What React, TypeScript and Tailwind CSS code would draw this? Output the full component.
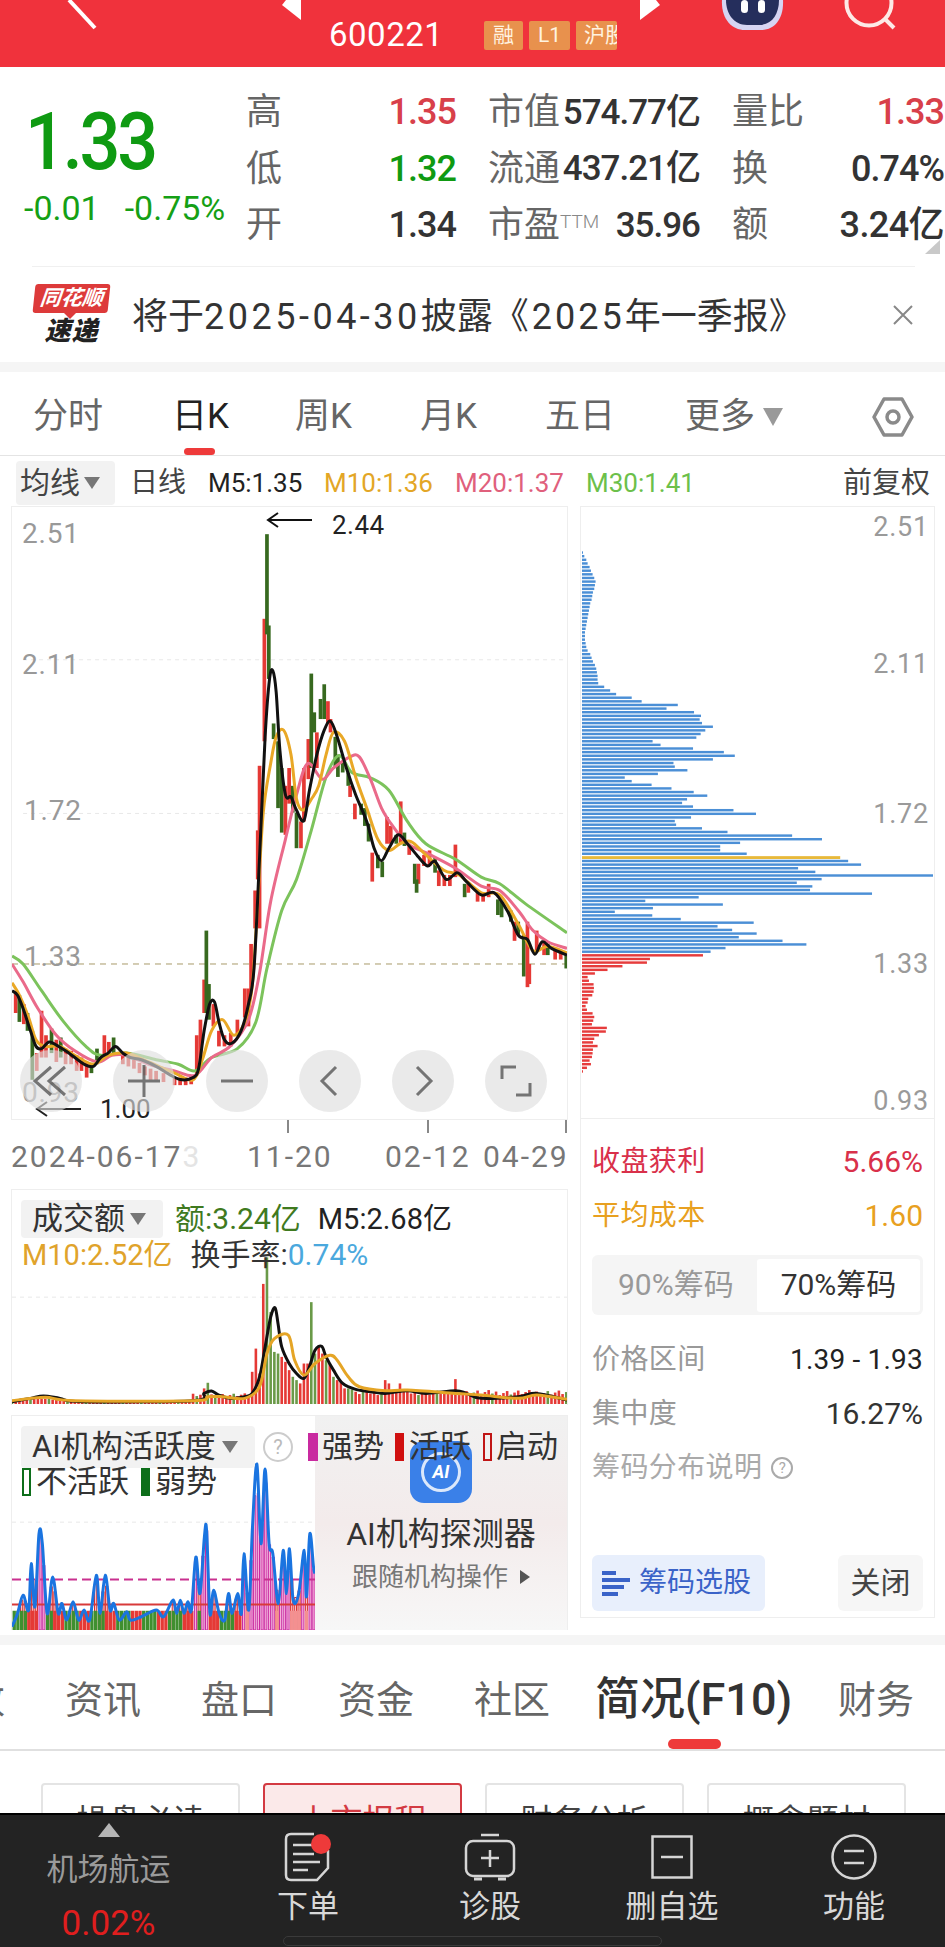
import React from "react";

type P = [number, number];
const smooth = (pts: P[]) => {
  let d = `M${pts[0][0]} ${pts[0][1]}`;
  for (let i = 0; i < pts.length - 1; i++) {
    const p0 = pts[Math.max(0, i - 1)], p1 = pts[i], p2 = pts[i + 1], p3 = pts[Math.min(pts.length - 1, i + 2)];
    const c1x = p1[0] + (p2[0] - p0[0]) / 6, c1y = p1[1] + (p2[1] - p0[1]) / 6;
    const c2x = p2[0] - (p3[0] - p1[0]) / 6, c2y = p2[1] - (p3[1] - p1[1]) / 6;
    d += ` C${c1x} ${c1y} ${c2x} ${c2y} ${p2[0]} ${p2[1]}`;
  }
  return d;
};
const interp = (pts: P[], x: number) => {
  for (let i = 0; i < pts.length - 1; i++) {
    if (x >= pts[i][0] && x <= pts[i + 1][0]) {
      const t = (x - pts[i][0]) / (pts[i + 1][0] - pts[i][0]);
      return pts[i][1] + t * (pts[i + 1][1] - pts[i][1]);
    }
  }
  return pts[pts.length - 1][1];
};
const Line = ({ pts, color, w = 3 }: { pts: P[]; color: string; w?: number }) => (
  <path d={smooth(pts)} fill="none" stroke={color} strokeWidth={w} vectorEffect="non-scaling-stroke" strokeLinejoin="round" />
);

const RED = "#e53935", GRN = "#37691f";
const m5: P[] = [[30,1100],[45,1110],[60,1140],[80,1190],[95,1225],[110,1230],[130,1215],[150,1222],[175,1235],[200,1250],[225,1265],[250,1270],[270,1250],[290,1240],[310,1225],[330,1240],[350,1250],[380,1255],[420,1270],[460,1290],[490,1300],[520,1295],[535,1275],[550,1190],[565,1130],[578,1125],[590,1170],[605,1210],[625,1218],[650,1190],[670,1130],[685,1050],[700,800],[715,530],[727,400],[736,382],[745,430],[755,560],[770,660],[785,665],[800,695],[820,718],[835,650],[855,570],[875,515],[892,495],[910,530],[935,600],[960,660],[990,720],[1010,780],[1030,808],[1050,780],[1075,750],[1100,770],[1130,800],[1155,820],[1175,810],[1205,850],[1235,835],[1260,855],[1300,885],[1335,880],[1370,920],[1400,975],[1425,985],[1445,1018],[1465,990],[1490,1005],[1532,1020]];
const m10: P[] = [[30,1082],[50,1110],[75,1160],[95,1210],[120,1225],[160,1225],[200,1245],[250,1265],[290,1245],[340,1240],[400,1260],[470,1285],[520,1300],[545,1255],[570,1190],[600,1165],[630,1200],[660,1170],[680,1090],[695,900],[710,700],[730,590],[745,530],[765,515],[785,570],[800,670],[818,695],[840,670],[860,640],[880,570],[900,520],[930,540],[960,620],[990,690],[1020,760],[1050,785],[1080,770],[1110,765],[1150,795],[1200,830],[1240,840],[1300,880],[1350,885],[1400,950],[1440,1010],[1480,1000],[1532,1015]];
const m20: P[] = [[30,1040],[60,1080],[100,1140],[150,1200],[200,1235],[260,1260],[300,1245],[340,1245],[400,1265],[470,1280],[525,1290],[570,1250],[620,1225],[670,1165],[700,1060],[730,900],[770,760],[800,660],[830,590],[870,625],[900,600],[945,575],[970,575],[1000,625],[1030,690],[1060,730],[1100,770],[1150,790],[1230,825],[1300,865],[1350,875],[1400,920],[1440,965],[1480,990],[1532,1005]];
const m30: P[] = [[30,1022],[60,1040],[110,1100],[170,1170],[230,1225],[270,1245],[340,1240],[420,1255],[480,1265],[525,1280],[570,1250],[640,1230],[690,1170],[720,1050],[760,920],[800,850],[840,740],[880,620],[915,572],[950,610],[1000,622],[1050,650],[1100,720],[1150,770],[1230,805],[1300,845],[1350,860],[1420,905],[1532,970]];

const candles: [number, number, number, 0 | 1][] = [
  [40,1100,1150,0],[50,1110,1170,1],[62,1130,1175,0],[72,1150,1190,1],[85,1190,1300,1],[97,1240,1280,0],[110,1145,1250,0],[122,1200,1250,0],[137,1185,1240,1],[150,1210,1260,0],[162,1205,1250,1],[175,1230,1265,0],[190,1235,1265,0],[205,1245,1280,0],[218,1250,1280,0],[232,1260,1295,0],[245,1262,1285,1],[260,1230,1265,1],[280,1200,1245,0],[292,1215,1240,0],[305,1205,1240,1],
  [330,1240,1265,0],[345,1245,1270,0],[360,1255,1275,0],[375,1262,1285,0],[390,1270,1290,0],[405,1275,1300,0],[420,1280,1300,0],[440,1285,1305,0],[470,1295,1312,0],[485,1295,1312,0],[500,1295,1312,0],[515,1290,1310,0],
  [530,1200,1290,0],[540,1165,1270,0],[550,1075,1150,0],[556,965,1150,1],[563,1085,1165,1],[575,1130,1180,0],[590,1190,1225,0],[605,1200,1225,0],[622,1195,1225,0],[640,1165,1200,0],[660,1095,1160,0],[670,1095,1180,0],[677,995,1100,0],[688,875,960,0],[695,740,850,0],[700,595,960,0],[713,265,540,0],[720,75,300,1],[725,280,400,1],[738,500,535,1],[750,540,690,1],[760,600,745,1],[770,640,750,0],[780,600,680,0],[790,640,700,1],[800,700,780,1],[812,720,780,0],[820,600,720,0],[832,535,625,0],[840,388,600,1],[848,475,520,1],[855,520,600,0],[865,445,490,1],[875,412,490,1],[885,450,500,0],[892,490,520,0],[905,530,600,1],[912,570,620,1],[925,585,610,1],[940,610,640,1],[945,640,665,0],[958,680,715,0],[975,680,705,1],[985,690,730,1],[995,725,765,1],[1005,790,855,0],[1020,795,825,1],[1032,810,845,1],[1045,710,770,0],[1055,730,770,0],[1070,750,770,1],[1082,675,770,0],[1092,745,775,1],[1105,770,795,0],[1120,815,860,1],[1130,815,860,0],[1125,850,880,1],[1145,795,820,0],[1160,785,820,0],[1175,800,835,1],[1185,830,865,0],[1200,840,865,0],[1215,840,865,0],[1230,772,845,0],[1255,860,890,1],[1265,860,880,0],[1290,880,900,0],[1305,880,900,0],[1320,860,890,0],[1345,895,930,1],[1355,900,935,1],[1380,920,945,1],[1390,945,988,0],[1400,945,975,1],[1415,975,1068,1],[1425,945,1092,0],[1430,1040,1085,0],[1450,965,1010,0],[1470,990,1020,0],[1480,995,1020,1],[1500,1005,1030,0],[1515,1010,1030,0],[1530,1020,1050,1],
];

const volSpecial: Record<number, [number, 0 | 1]> = {
  550:[625,0],560:[608,1],680:[575,0],690:[505,0],700:[580,0],710:[310,0],720:[230,1],730:[395,1],740:[515,1],750:[520,1],760:[530,0],770:[545,0],780:[570,0],790:[590,1],800:[600,1],810:[610,0],820:[550,0],830:[550,0],840:[365,1],850:[520,1],860:[500,0],870:[520,0],880:[540,1],890:[550,0],900:[590,1],910:[600,0],920:[605,0],930:[625,0],940:[625,1],950:[628,1],960:[635,0],1040:[600,0],1050:[610,0],1080:[610,0],1230:[597,0],1430:[630,0],
};
const volBars = Array.from({ length: 151 }, (_, i) => {
  const x = 30 + i * 10;
  if (volSpecial[x]) return { x, top: volSpecial[x][0], c: volSpecial[x][1] };
  const seed = (i * 37) % 11;
  const c: 0 | 1 = (i * 13) % 5 === 0 ? 1 : 0;
  if (x < 520) return { x, top: 664 - (seed % 4) - (x < 170 ? 5 : 0), c };
  if (x < 680) return { x, top: 650 - seed, c };
  return { x, top: 645 - seed * 1.5, c };
});
const v5: P[] = [[30,665],[80,655],[115,648],[160,655],[220,665],[520,662],[550,640],[570,633],[590,645],[620,655],[660,650],[680,640],[700,590],[715,500],[730,410],[742,382],[750,430],[760,500],[780,550],[800,580],[820,595],[835,560],[850,510],[868,498],[880,530],[900,570],[925,610],[960,628],[1000,635],[1040,640],[1100,632],[1150,640],[1230,632],[1260,640],[1300,655],[1400,650],[1450,640],[1532,660]];
const v10: P[] = [[30,662],[120,652],[200,662],[520,662],[560,650],[600,650],[660,655],[700,620],[720,520],[740,475],[778,465],[795,540],[820,585],[850,550],[890,525],[910,540],[940,590],[970,620],[1040,632],[1100,630],[1230,640],[1300,645],[1400,655],[1450,645],[1532,658]];

const blue: P[] = [[30,1340],[45,1300],[60,1245],[75,1290],[82,1150],[92,1280],[103,1060],[112,1090],[125,1300],[140,1190],[155,1300],[165,1270],[178,1320],[195,1265],[210,1320],[225,1290],[240,1320],[258,1185],[268,1300],[282,1185],[295,1290],[305,1270],[320,1320],[340,1295],[350,1320],[380,1310],[420,1290],[440,1310],[465,1260],[475,1300],[485,1260],[495,1300],[505,1265],[515,1290],[527,1130],[538,1240],[550,1070],[556,1050],[565,1300],[575,1230],[590,1300],[605,1320],[615,1240],[625,1300],[640,1240],[650,1300],[657,1120],[670,1290],[680,1040],[692,850],[703,1090],[714,865],[725,1090],[735,1120],[750,1270],[763,1110],[772,1240],[780,1105],[790,1260],[805,1240],[820,1110],[826,1250],[835,1060],[845,1160],[849,1180]];

const chipW = [36,40,46,50,56,60,65,70,74,72,70,66,64,62,58,56,54,52,50,48,46,44,42,42,42,44,46,50,58,62,66,72,76,78,80,80,82,100,118,136,183,213,322,288,371,392,388,395,428,405,391,378,246,270,368,461,494,428,309,313,351,262,162,183,243,303,370,411,350,335,368,490,558,362,313,317,395,472,667,757,510,450,450,530,812,836,875,685,737,1092,756,681,728,721,908,385,224,458,247,132,245,331,551,442,486,560,506,638,710,466,421,398,238,229,155,110,72,50,54,68,69,68,64,52,50,44,48,65,70,67,63,108,105,84,70,66,80,66,65,63,56,60,48,36];
const goldIdx = 84, redFrom = 111;

const Quote = ({ l, v, c = "text-[#333]" }: { l: React.ReactNode; v: React.ReactNode; c?: string }) => (
  <div className="flex h-[56px] items-center justify-between">
    <span className="text-[#666]">{l}</span>
    <span className={`${c} font-medium tracking-[-1px]`}>{v}</span>
  </div>
);

const RoundBtn = ({ children }: { children: React.ReactNode }) => (
  <div className="flex h-[62px] w-[62px] items-center justify-center rounded-full bg-[#dedede]/70">
    <svg width="40" height="40" viewBox="0 0 40 40" fill="none" stroke="#666" strokeWidth="3">{children}</svg>
  </div>
);

const YLabel = ({ t, y, x }: { t: string; y: string; x: string }) => (
  <span className={`absolute ${y} ${x} text-[28px] leading-[32px] tracking-[0.8px] text-[#999]`}>{t}</span>
);

const Tool = ({ icon, t }: { icon: React.ReactNode; t: string }) => (
  <div className="flex w-[182px] flex-col items-center">
    <div className="flex h-[52px] items-center justify-center">{icon}</div>
    <span className="mt-[6px] whitespace-nowrap text-[31px] leading-[36px] text-[#d8d8d8]">{t}</span>
  </div>
);

export default function App() {
  return (
    <div className="flex h-[1947px] w-[945px] flex-col overflow-hidden whitespace-nowrap bg-white font-['Roboto','Noto_Sans_CJK_SC',sans-serif]">
      {/* header */}
      <div className="flex h-[67px] shrink-0 items-start bg-[#f0323c]">
        <svg className="ml-[66px]" width="32" height="30" viewBox="0 0 32 30"><path d="M3 0 L29 28" stroke="#fff" strokeWidth="4" fill="none" /></svg>
        <svg className="ml-[184px]" width="19" height="20" viewBox="0 0 19 20"><path d="M19 0 V20 L0 5 L4 0Z" fill="#fff" /></svg>
        <span className="ml-[28px] mt-[17px] w-[110px] text-[33px] leading-[36px] tracking-[0.5px] text-[#fff]">600221</span>
        <div className="ml-[45px] mt-[21px] flex gap-[6px]">
          <span className="flex h-[29px] w-[39px] items-center justify-center rounded-[2px] bg-[#e8914d] text-[21px] leading-none text-[#fff3e0]">融</span>
          <span className="flex h-[29px] w-[41px] items-center justify-center rounded-[2px] bg-[#e8914d] text-[21px] leading-none text-[#fff3e0]">L1</span>
          <span className="h-[29px] w-[41px] overflow-hidden whitespace-nowrap rounded-[2px] bg-[#e8914d] pl-[8px] text-[21px] leading-[29px] text-[#fff3e0]">沪股通</span>
        </div>
        <svg className="ml-[23px]" width="20" height="20" viewBox="0 0 20 20"><path d="M0 0 V20 L20 5 L16 0Z" fill="#fff" /></svg>
        <svg className="ml-[61px]" width="63" height="31" viewBox="0 0 63 31">
          <path d="M1 0 C0 18 10 30 24 30 H40 C54 30 63 18 62 0Z" fill="#d6d4f2" />
          <path d="M5 0 C5 14 13 25 26 25 H38 C51 25 58 14 58 0Z" fill="#252e5c" />
          <rect x="20" y="0" width="7" height="13" rx="3.5" fill="#fff" />
          <rect x="37" y="0" width="7" height="13" rx="3.5" fill="#fff" />
        </svg>
        <svg className="ml-[60px]" width="52" height="30" viewBox="0 0 52 30" fill="none" stroke="#fde9e6" strokeWidth="4"><circle cx="25" cy="3" r="22.5" /><path d="M41 19 L50 28" /></svg>
      </div>

      {/* quote */}
      <div className="relative flex h-[200px] shrink-0">
        <div className="flex w-[246px] shrink-0 flex-col pl-[24px]">
          <span className="mt-[33px] origin-left scale-x-[0.9] pl-[1px] text-[80px] font-medium leading-[84px] tracking-[-3.5px] text-[#0f9a12]">1.33</span>
          <div className="mt-[6px] flex text-[34px] leading-[36px] text-[#15a015]">
            <span>-0.01</span>
            <span className="ml-[25px]">-0.75%</span>
          </div>
        </div>
        <div className="mt-[17px] grid h-[170px] grid-cols-[210px_212px_212px] gap-x-[32px] text-[36px] leading-[40px]">
          <Quote l="高" v="1.35" c="text-[#d8404a]" />
          <Quote l="市值" v={<span className="text-[35px]">574.77亿</span>} />
          <Quote l="量比" v="1.33" c="text-[#d8404a]" />
          <Quote l="低" v="1.32" c="text-[#0f9a12]" />
          <Quote l="流通" v={<span className="text-[35px]">437.21亿</span>} />
          <Quote l="换" v="0.74%" />
          <Quote l="开" v="1.34" />
          <Quote l={<span>市盈<sup className="text-[19px] font-light text-[#888]">TTM</sup></span>} v={<span className="text-[35px]">35.96</span>} />
          <Quote l="额" v={<span className="tracking-[-0.6px]">3.24亿</span>} />
        </div>
        <svg className="absolute bottom-[13px] right-[5px]" width="15" height="14" viewBox="0 0 15 14"><path d="M15 0 V14 H0Z" fill="#c9c9c9" /></svg>
        <span className="absolute bottom-0 left-[32px] right-[30px] h-[1px] bg-[#f0f0f0]" />
      </div>

      {/* notice */}
      <div className="flex h-[95px] shrink-0 items-center pl-[33px]">
        <div className="relative flex h-[62px] w-[77px] shrink-0 flex-col items-center">
          <span className="flex h-[29px] w-[75px] -skew-x-6 items-center justify-center rounded-[3px] bg-[#dd3a3a] text-[21px] font-bold italic leading-none text-white">同花顺</span>
          <svg className="absolute left-[30px] top-[28px]" width="14" height="7" viewBox="0 0 14 7"><path d="M0 0 H14 L7 7Z" fill="#dd3a3a" /></svg>
          <span className="mt-[4px] text-[26px] font-black italic leading-[29px] tracking-[1px] text-[#222]">速递</span>
        </div>
        <span className="ml-[22px] mt-[5px] whitespace-nowrap text-[36px] leading-[44px] text-[#333]">
          将于<span className="tracking-[3.5px]">2025-04-30</span>披露<span className="tracking-[3px]">《2025</span>年一季报》
        </span>
        <svg className="ml-auto mr-[32px]" width="20" height="20" viewBox="0 0 20 20" stroke="#888" strokeWidth="2"><path d="M1 1 L19 19 M19 1 L1 19" /></svg>
      </div>
      <div className="h-[10px] shrink-0 bg-[#f5f5f5]" />

      {/* period tabs */}
      <div className="relative flex h-[84px] shrink-0 items-center border-b border-[#e4e4e4] pl-[33px] pt-[6px] text-[35px] leading-[40px] text-[#666]">
        <span className="w-[71px]">分时</span>
        <span className="ml-[68px] w-[58px] text-[#222]">日K</span>
        <span className="ml-[65px] w-[60px]">周K</span>
        <span className="ml-[65px] w-[60px]">月K</span>
        <span className="ml-[65px] w-[70px]">五日</span>
        <span className="ml-[70px] w-[70px]">更多</span>
        <svg className="ml-[8px]" width="20" height="20" viewBox="0 0 20 20"><path d="M0 1 H20 L10 19Z" fill="#999" /></svg>
        <svg className="ml-[89px]" width="42" height="42" viewBox="0 0 42 42" fill="none" stroke="#8a8a8a" strokeWidth="3.5"><path d="M12 3 H30 L40 21 L30 39 H12 L2 21Z" strokeLinejoin="round" /><circle cx="21" cy="21" r="6" /></svg>
        <span className="absolute bottom-0 left-[184px] h-[7px] w-[31px] rounded-full bg-[#ee3a3a]" />
      </div>

      {/* MA legend */}
      <div className="flex h-[50px] shrink-0 items-center pl-[16px] pt-[3px] text-[26px] leading-[32px]">
        <span className="flex h-[44px] w-[99px] items-center rounded-[4px] bg-[#f2f2f2] pl-[4px] text-[30px] text-[#444]">均线<svg className="ml-[4px]" width="16" height="14" viewBox="0 0 16 14"><path d="M0 1 H16 L8 13Z" fill="#777" /></svg></span>
        <span className="ml-[15px] w-[56px] text-[28px] text-[#444]">日线</span>
        <span className="ml-[22px] w-[94px] text-[#222]">M5:1.35</span>
        <span className="ml-[22px] w-[109px] text-[#e3a626]">M10:1.36</span>
        <span className="ml-[22px] w-[109px] text-[#e0607c]">M20:1.37</span>
        <span className="ml-[22px] w-[109px] text-[#6cc04a]">M30:1.41</span>
        <span className="ml-auto mr-[15px] text-[29px] text-[#444]">前复权</span>
      </div>

      {/* main */}
      <div className="flex h-[1129px] shrink-0 pl-[11px]">
        <div className="flex w-[557px] shrink-0 flex-col">
          {/* K chart */}
          <div className="relative h-[614px] shrink-0 border border-[#eeeeee]">
            <svg className="absolute inset-0 h-full w-full" viewBox="30 14 1502 1374" preserveAspectRatio="none">
              <path d="M60 357 H1532" stroke="#e8e8e8" strokeDasharray="4 4" vectorEffect="non-scaling-stroke" />
              <path d="M60 702 H1532" stroke="#e8e8e8" strokeDasharray="4 4" vectorEffect="non-scaling-stroke" />
              <path d="M30 1040 H1532" stroke="#a89a6a" strokeWidth="1" strokeDasharray="6 5" vectorEffect="non-scaling-stroke" />
              {candles.map(([x, t, b, c], i) => (
                <rect key={i} x={x - 5} y={t} width={10} height={b - t} fill={c ? GRN : RED} />
              ))}
              <Line pts={m30} color="#7cc35c" />
              <Line pts={m20} color="#ea6a8a" />
              <Line pts={m10} color="#e9a826" />
              <Line pts={m5} color="#111" />
            </svg>
            <YLabel t="2.51" y="top-[11px]" x="left-[10px]" />
            <YLabel t="2.11" y="top-[142px]" x="left-[10px]" />
            <YLabel t="1.72" y="top-[288px]" x="left-[12px]" />
            <YLabel t="1.33" y="top-[434px]" x="left-[12px]" />
            <YLabel t="0.93" y="top-[570px]" x="left-[10px]" />
            <div className="absolute left-[254px] top-[2px] flex items-center">
              <svg className="mb-[10px]" width="46" height="18" viewBox="0 0 46 18" fill="none" stroke="#111" strokeWidth="2"><path d="M46 9 H2 M12 2 L2 9 L12 16" /></svg>
              <span className="ml-[20px] text-[26px] leading-[32px] tracking-[0.5px] text-[#222]">2.44</span>
            </div>
            <div className="absolute left-[23px] top-[586px] flex items-center">
              <svg width="46" height="18" viewBox="0 0 46 18" fill="none" stroke="#222" strokeWidth="2"><path d="M46 9 H2 M12 2 L2 9 L12 16" /></svg>
              <span className="ml-[19px] text-[26px] leading-[32px] text-[#222]">1.00</span>
            </div>
            <div className="absolute left-[8px] top-[543px] flex gap-[31px] opacity-90">
              <RoundBtn><path d="M20 6 L4 20 L20 34 M34 6 L18 20 L34 34" /></RoundBtn>
              <RoundBtn><path d="M20 4 V36 M4 20 H36" /></RoundBtn>
              <RoundBtn><path d="M4 20 H36" /></RoundBtn>
              <RoundBtn><path d="M26 6 L12 20 L26 34" /></RoundBtn>
              <RoundBtn><path d="M14 6 L28 20 L14 34" /></RoundBtn>
              <RoundBtn><path d="M20 6 H6 V18 M20 34 H34 V22" /></RoundBtn>
            </div>
          </div>
          {/* dates */}
          <div className="relative flex h-[69px] shrink-0 items-end whitespace-nowrap pb-[14px] text-[30px] leading-[36px] tracking-[2px] text-[#777]">
            <span className="w-[172px]">2024-06-17</span>
            <span className="w-[20px] text-[#e4e4e4]">3</span>
            <span className="ml-[45px] w-[85px]">11-20</span>
            <span className="ml-[53px] w-[85px]">02-12</span>
            <span className="ml-[13px] w-[85px]">04-29</span>
            <span className="absolute left-[276px] top-0 h-[13px] w-[2px] bg-[#888]" />
            <span className="absolute left-[416px] top-0 h-[13px] w-[2px] bg-[#888]" />
            <span className="absolute left-[554px] top-0 h-[13px] w-[2px] bg-[#888]" />
          </div>
          {/* volume */}
          <div className="relative h-[216px] shrink-0 border border-b-0 border-[#eeeeee]">
            <svg className="absolute inset-0 h-full w-full" viewBox="30 27 1502 648" preserveAspectRatio="none">
              <path d="M30 350 H1532" stroke="#e8e8e8" strokeDasharray="4 4" vectorEffect="non-scaling-stroke" />
              {volBars.map((b) => (
                <rect key={b.x} x={b.x - 3.5} y={b.top} width={7} height={672 - b.top} fill={b.c ? "#6a9a48" : RED} />
              ))}
              <Line pts={v5} color="#111" w={3} />
              <Line pts={v10} color="#e5a526" w={3} />
            </svg>
            <div className="absolute left-[9px] top-[10px] text-[30px] leading-[36px]">
              <div className="flex items-center whitespace-nowrap">
                <span className="flex h-[38px] w-[142px] items-center rounded-[4px] bg-[#f2f2f2] pl-[11px] text-[31px] text-[#333]">成交额<svg className="ml-[5px]" width="16" height="14" viewBox="0 0 16 14"><path d="M0 1 H16 L8 13Z" fill="#777" /></svg></span>
                <span className="ml-[12px] text-[#3f7a1f]">额:3.24亿</span>
                <span className="ml-[17px] text-[29px] text-[#222]">M5:2.68亿</span>
              </div>
              <div className="ml-[1px] mt-[-1px] flex whitespace-nowrap">
                <span className="text-[29px] text-[#e0a32b]">M10:2.52亿</span>
                <span className="ml-[18px] text-[#333]">换手率:</span>
                <span className="text-[#4aa8dd]">0.74%</span>
              </div>
            </div>
          </div>
          <div className="h-[10px] shrink-0" />
          {/* AI */}
          <div className="relative flex h-[215px] shrink-0 border border-b-0 border-[#eeeeee]">
            <div className="h-full w-[303px] shrink-0">
              <svg className="h-full w-full" viewBox="30 705 819 645" preserveAspectRatio="none">
                <path d="M30 1025 H849" stroke="#e8e8e8" strokeDasharray="4 4" vectorEffect="non-scaling-stroke" />
                {Array.from({ length: 82 }, (_, i) => {
                  const x = 36 + i * 10;
                  const y = interp(blue, x);
                  const hi = y < 1198;
                  const mid = y < 1273;
                  return (
                    <g key={i}>
                      {mid && <rect x={x - 3} y={y} width={6} height={1350 - y} fill={hi ? "#f6b0dc" : "#f8c0c4"} stroke={hi ? "#c92aa0" : "#d83030"} strokeWidth={1} vectorEffect="non-scaling-stroke" />}
                      {!hi && <rect x={x - 4.5} y={1292} width={9} height={58} fill={x > 650 ? "#f49090" : i % 7 < 4 ? "#3f8f2f" : "#e53935"} />}
                    </g>
                  );
                })}
                <path d="M30 1198 H849" stroke="#c9308f" strokeWidth="2" strokeDasharray="9 5" vectorEffect="non-scaling-stroke" />
                <path d="M30 1273 H849" stroke="#d83a3a" strokeWidth="2" vectorEffect="non-scaling-stroke" />
                <Line pts={blue} color="#1a74e0" w={3} />
              </svg>
            </div>
            <div className="flex flex-1 flex-col items-center bg-gradient-to-b from-[#f1f1f1] via-[#f3ebeb] to-[#f7f7f7] pt-[25px]">
              <div className="relative flex h-[62px] w-[62px] items-center justify-center rounded-[14px] bg-[#3a80e8]">
                <span className="flex h-[40px] w-[40px] items-center justify-center rounded-full border-[3px] border-[#dbe8fb] text-[18px] font-bold italic leading-none text-white">AI</span>
              </div>
              <span className="mt-[13px] whitespace-nowrap text-[32px] leading-[36px] text-[#333]">AI机构探测器</span>
              <span className="mt-[9px] flex items-center whitespace-nowrap text-[26px] leading-[32px] text-[#777]">跟随机构操作<svg className="ml-[12px]" width="10" height="14" viewBox="0 0 10 14"><path d="M0 0 L10 7 L0 14Z" fill="#555" /></svg></span>
            </div>
            <div className="absolute left-[9px] top-[10px] text-[30px] leading-[36px] text-[#333]">
              <div className="flex items-center whitespace-nowrap">
                <span className="flex h-[42px] w-[234px] items-center rounded-[4px] bg-[#f2f2f2] pl-[11px] text-[31px]">AI机构活跃度<svg className="ml-[6px]" width="16" height="14" viewBox="0 0 16 14"><path d="M0 1 H16 L8 13Z" fill="#777" /></svg></span>
                <span className="ml-[8px] flex h-[30px] w-[30px] items-center justify-center rounded-full border-2 border-[#ccc] text-[20px] leading-none text-[#bbb]">?</span>
                <span className="ml-[15px] h-[28px] w-[10px] bg-[#c92aa0]" />
                <span className="ml-[4px] text-[31px]">强势</span>
                <span className="ml-[11px] h-[28px] w-[9px] bg-[#d01010]" />
                <span className="ml-[5px] text-[31px]">活跃</span>
                <span className="ml-[12px] h-[28px] w-[9px] border-2 border-[#c01515]" />
                <span className="ml-[4px] text-[31px]">启动</span>
              </div>
              <div className="ml-[1px] mt-[-4px] flex items-center whitespace-nowrap">
                <span className="h-[28px] w-[9px] border-2 border-[#0d6e1a]" />
                <span className="ml-[5px] text-[31px]">不活跃</span>
                <span className="ml-[12px] h-[28px] w-[9px] bg-[#0d6e1a]" />
                <span className="ml-[5px] text-[31px]">弱势</span>
              </div>
            </div>
          </div>
        </div>

        {/* right column */}
        <div className="ml-[12px] flex w-[355px] shrink-0 flex-col">
          <div className="relative h-[613px] shrink-0 border border-[#eeeeee]">
            <svg className="absolute inset-0 h-full w-full" viewBox="30 15 1065 1502" preserveAspectRatio="none">
              {chipW.map((w, i) => (
                <rect key={i} x={33} y={124 + i * 8.92} width={w - 33} height={i === goldIdx ? 7 : 6} fill={i === goldIdx ? "#e8b93a" : i >= redFrom ? "#e63c3c" : "#4b8fd6"} />
              ))}
            </svg>
            <div className="absolute right-[5px] top-0 flex h-full flex-col text-right text-[27px] leading-[32px] tracking-[0.8px] text-[#9a9a9a]">
              <span className="mt-[4px]">2.51</span>
              <span className="mt-[105px]">2.11</span>
              <span className="mt-[118px]">1.72</span>
              <span className="mt-[118px]">1.33</span>
              <span className="mt-[105px]">0.93</span>
            </div>
          </div>
          <div className="flex h-[499px] shrink-0 flex-col border border-t-0 border-[#eeeeee] px-[11px] text-[28px] leading-[36px]">
            <div className="mt-[25px] flex justify-between text-[#d9304a]"><span className="tracking-[0.4px]">收盘获利</span><span className="text-[30px]">5.66%</span></div>
            <div className="mt-[18px] flex justify-between text-[#e8a020]"><span className="tracking-[0.4px]">平均成本</span><span className="text-[30px]">1.60</span></div>
            <div className="mt-[21px] flex h-[60px] items-center rounded-[6px] bg-[#f5f5f5] pr-[3px] text-[30px]">
              <span className="w-[165px] pl-[26px] text-[#999]">90%筹码</span>
              <span className="flex h-[53px] flex-1 items-center justify-center rounded-[3px] bg-white text-[#333]">70%筹码</span>
            </div>
            <div className="mt-[27px] flex justify-between"><span className="tracking-[0.4px] text-[#999]">价格区间</span><span className="text-[28px] tracking-[0.2px] text-[#222]">1.39 - 1.93</span></div>
            <div className="mt-[18px] flex justify-between"><span className="tracking-[0.4px] text-[#999]">集中度</span><span className="text-[30px] text-[#333]">16.27%</span></div>
            <div className="mt-[18px] flex items-center text-[#aaa]"><span className="tracking-[0.4px]">筹码分布说明</span><span className="ml-[9px] flex h-[22px] w-[22px] items-center justify-center rounded-full border-2 border-[#aaa] text-[15px] leading-none">?</span></div>
            <div className="mb-[6px] mt-auto flex justify-between">
              <span className="flex h-[56px] w-[173px] items-center rounded-[6px] bg-[#e8effc] pl-[10px] text-[#3a63c8]">
                <svg width="28" height="28" viewBox="0 0 28 28" fill="#3a63c8"><rect y="2" width="14" height="4" /><rect y="9" width="28" height="4" /><rect y="16" width="22" height="4" /><rect y="23" width="16" height="4" /></svg>
                <span className="ml-[9px]">筹码选股</span>
              </span>
              <span className="flex h-[56px] w-[85px] items-center justify-center rounded-[6px] bg-[#f6f6f6] text-[30px] text-[#444]">关闭</span>
            </div>
          </div>
        </div>
      </div>

      <div className="h-[10px] shrink-0 bg-[#f5f5f5]" />

      {/* section tabs */}
      <div className="relative h-[106px] shrink-0 overflow-hidden border-b-2 border-[#e0e0e0]">
        <div className="flex h-full items-center pb-0 pt-[6px] text-[38px] leading-[44px] text-[#666]">
          <span className="ml-[-33px] w-[38px]">数</span>
          <span className="ml-[60px] w-[77px]">资讯</span>
          <span className="ml-[59px] w-[77px]">盘口</span>
          <span className="ml-[60px] w-[77px]">资金</span>
          <span className="ml-[59px] w-[77px]">社区</span>
          <span className="ml-[44px] w-[198px] whitespace-nowrap text-[45px] font-medium text-[#333]">简况(F10)</span>
          <span className="ml-[45px] w-[77px]">财务</span>
        </div>
        <span className="absolute bottom-0 left-[668px] h-[10px] w-[53px] rounded-full bg-[#ee3a3a]" />
      </div>

      {/* chips */}
      <div className="flex h-[62px] shrink-0 gap-[23px] overflow-hidden pl-[41px] pt-[32px]">
        <span className="h-[80px] w-[199px] shrink-0 rounded-[4px] border-2 border-[#e4e4e4] pt-[14px] text-center text-[32px] leading-[44px] text-[#444]">操盘必读</span>
        <span className="h-[80px] w-[199px] shrink-0 rounded-[4px] border-2 border-[#d33a42] bg-[#fbe9e9] pt-[14px] text-center text-[32px] leading-[44px] text-[#d33a42]">上市报程</span>
        <span className="h-[80px] w-[199px] shrink-0 rounded-[4px] border-2 border-[#e4e4e4] pt-[14px] text-center text-[32px] leading-[44px] text-[#444]">财务分析</span>
        <span className="h-[80px] w-[199px] shrink-0 rounded-[4px] border-2 border-[#e4e4e4] pt-[14px] text-center text-[32px] leading-[44px] text-[#444]">概念题材</span>
      </div>

      {/* bottom bar */}
      <div className="relative flex flex-1 border-t-2 border-black bg-[#232323]">
        <div className="flex w-[217px] shrink-0 flex-col items-center">
          <svg className="mt-[8px]" width="22" height="14" viewBox="0 0 22 14"><path d="M11 0 L22 14 H0Z" fill="#b5b5b5" /></svg>
          <span className="mt-[14px] text-[31px] leading-[38px] text-[#9a9a9a]">机场航运</span>
          <span className="mt-[16px] text-[35px] leading-[38px] text-[#e01e1e]">0.02%</span>
        </div>
        <div className="mt-[16px] flex flex-1">
          <Tool t="下单" icon={
            <svg width="48" height="50" viewBox="0 0 48 50" fill="none" stroke="#d5d5d5" strokeWidth="2.5"><path d="M30 2 H7 Q2 2 2 7 V43 Q2 48 7 48 H33 L44 36 V18" /><path d="M9 13 H28 M9 22 H30 M9 30 H36 M9 38 H24" /><circle cx="37" cy="12" r="10" fill="#ee3a3a" stroke="none" /></svg>
          } />
          <Tool t="诊股" icon={
            <svg width="52" height="48" viewBox="0 0 52 48" fill="none" stroke="#d5d5d5" strokeWidth="2.5"><path d="M17 2 H35" /><rect x="2" y="8" width="48" height="35" rx="7" /><path d="M26 17 V34 M17 25 H35" /><path d="M10 46 H18 M34 46 H42" strokeWidth="3" /></svg>
          } />
          <Tool t="删自选" icon={
            <svg width="42" height="44" viewBox="0 0 42 44" fill="none" stroke="#d5d5d5" strokeWidth="2.5"><rect x="1.5" y="1.5" width="39" height="41" /><path d="M10 22 H32" /></svg>
          } />
          <Tool t="功能" icon={
            <svg width="46" height="46" viewBox="0 0 46 46" fill="none" stroke="#d5d5d5" strokeWidth="2.5"><circle cx="23" cy="23" r="21.5" /><path d="M13 17 H33 M13 29 H33" /></svg>
          } />
        </div>
        <span className="absolute bottom-[1px] left-[283px] h-[10px] w-[379px] rounded-full border border-[#3a3a3a]" />
      </div>
    </div>
  );
}
